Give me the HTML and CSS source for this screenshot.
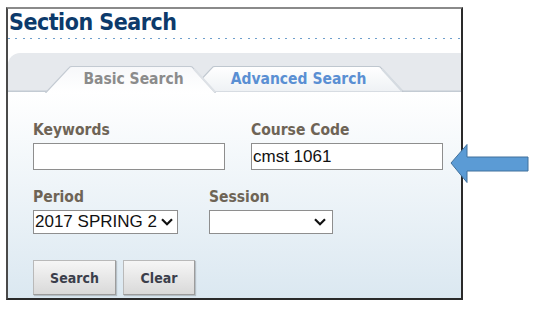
FILE: index.html
```html
<!DOCTYPE html>
<html>
<head>
<meta charset="utf-8">
<link rel="stylesheet" href="styles.css">
</head>
<body>
<div class="frame">
  <h1 class="title">Section Search</h1>
  <div class="dots"></div>
  <div class="tabband">
    <div class="tab tab-basic">
      <svg class="tab-shape" width="171" height="27" viewBox="0 0 171 27">
        <defs>
          <linearGradient id="gb" x1="0" y1="0" x2="0" y2="1">
            <stop offset="0" stop-color="#f7f8fa"/>
            <stop offset="1" stop-color="#ffffff"/>
          </linearGradient>
        </defs>
        <path d="M0,27 L24,1.8 Q25,0.5 27,0.5 L145,0.5 Q147,0.5 148,1.8 L171,27 Z" fill="url(#gb)"/>
        <path d="M0.5,27 L24,1.8 Q25,0.5 27,0.5 L145,0.5 Q147,0.5 148,1.8 L170.5,27" fill="none" stroke="#c3cad2" stroke-width="1.2"/>
        <path d="M149,3 L170,26" fill="none" stroke="#dde1e6" stroke-width="2"/>
      </svg>
      <span class="tab-label">Basic Search</span>
    </div>
    <div class="tab tab-adv">
      <svg class="tab-shape" width="215" height="26" viewBox="0 0 215 26">
        <defs>
          <linearGradient id="ga" x1="0" y1="0" x2="0" y2="1">
            <stop offset="0" stop-color="#ffffff"/>
            <stop offset="1" stop-color="#eef1f4"/>
          </linearGradient>
        </defs>
        <path d="M0.5,26 L23,1.8 Q24,0.5 26,0.5 L189,0.5 Q191,0.5 192,1.8 L214.5,26 Z" fill="url(#ga)" stroke="#bfc7cf" stroke-width="1.2"/>
        <path d="M193,3 L213,25" fill="none" stroke="#d5dbe1" stroke-width="2"/>
      </svg>
      <span class="tab-label">Advanced Search</span>
    </div>
  </div>
  <div class="panel">
    <div class="row row-top">
      <div class="field">
        <div class="label">Keywords</div>
        <div class="input input-wide"></div>
      </div>
      <div class="field">
        <div class="label">Course Code</div>
        <div class="input input-wide">cmst 1061</div>
      </div>
    </div>
    <div class="row row-mid">
      <div class="field">
        <div class="label">Period</div>
        <div class="select select-period">
          <span class="select-text">2017 SPRING 2</span>
          <svg class="chev" width="12" height="8" viewBox="0 0 12 8"><path d="M1,1.2 L6,6.2 L11,1.2" fill="none" stroke="#111" stroke-width="2.2"/></svg>
        </div>
      </div>
      <div class="field">
        <div class="label">Session</div>
        <div class="select select-session">
          <span class="select-text"></span>
          <svg class="chev" width="12" height="8" viewBox="0 0 12 8"><path d="M1,1.2 L6,6.2 L11,1.2" fill="none" stroke="#111" stroke-width="2.2"/></svg>
        </div>
      </div>
    </div>
    <div class="buttons">
      <div class="btn btn-search">Search</div>
      <div class="btn btn-clear">Clear</div>
    </div>
  </div>
</div>
<svg class="arrow" width="81" height="41" viewBox="0 0 81 41">
  <path d="M2,20 L18,1.5 L18,14 L79,14 L79,28 L18,28 L18,39.5 Z" fill="#5b9bd5" stroke="#41719c" stroke-width="1"/>
</svg>
</body>
</html>
```
FILE: styles.css
```css
* { box-sizing: border-box; }
body {
  margin: 0;
  background: #ffffff;
  position: relative;
  width: 533px;
  height: 315px;
  overflow: hidden;
}
.frame {
  margin: 7px 0 0 6px;
  width: 457px;
  height: 293px;
  border: 2px solid #2a2a2a;
  border-top-color: #8a8a8a;
  border-left-color: #4a4a4a;
  display: flex;
  flex-direction: column;
}
.title {
  margin: 0;
  padding-left: 1px;
  font-family: "DejaVu Sans Condensed", "DejaVu Sans", sans-serif;
  font-stretch: condensed;
  font-weight: bold;
  font-size: 23px;
  letter-spacing: -0.5px;
  line-height: 26px;
  color: #0c3a6b;
}
.dots {
  margin-top: 3px;
  height: 1px;
  background: repeating-linear-gradient(to right, #6f9fcc 0 2px, transparent 2px 7.5px);
}
.tabband {
  margin-top: 14px;
  height: 39px;
  background: #e6e9ed;
  border-top-left-radius: 12px;
  box-shadow: inset 0 -1.5px 0 #c3cbd3;
  display: flex;
  align-items: flex-end;
}
.tab {
  position: relative;
  display: flex;
  align-items: center;
  justify-content: center;
  font-family: "DejaVu Sans Condensed", "DejaVu Sans", sans-serif;
  font-stretch: condensed;
  font-weight: bold;
  font-size: 15.5px;
}
.tab-shape {
  position: absolute;
  left: 0;
  top: 0;
}
.tab-label {
  position: relative;
  line-height: 26px;
}
.tab-basic {
  width: 171px;
  height: 27px;
  margin-left: 37px;
  margin-bottom: -1px;
  z-index: 2;
  color: #8b8b8b;
  padding-left: 6px;
  padding-bottom: 1px;
}
.tab-adv {
  width: 215px;
  height: 26px;
  margin-left: -27px;
  z-index: 1;
  color: #5a8fd3;
  padding-left: 4px;
}
.panel {
  flex: 1;
  padding: 29px 0 0 25px;
  background: linear-gradient(#ffffff, #dbe8f1);
}
.row {
  display: flex;
}
.row-top { gap: 26px; }
.row-mid { gap: 31px; margin-top: 18px; }
.field {
  display: flex;
  flex-direction: column;
}
.label {
  font-family: "DejaVu Sans Condensed", "DejaVu Sans", sans-serif;
  font-stretch: condensed;
  font-weight: bold;
  font-size: 15.5px;
  line-height: 18px;
  color: #6e6456;
  margin-bottom: 4px;
}
.input {
  height: 27px;
  border: 1px solid #8e8e8e;
  background: #ffffff;
  font-family: "Liberation Sans", Arial, sans-serif;
  font-size: 17px;
  line-height: 25px;
  padding-left: 1px;
  color: #111;
}
.input-wide { width: 192px; }
.select {
  height: 24px;
  border: 1px solid #8e8e8e;
  background: #ffffff;
  display: flex;
  align-items: center;
  justify-content: space-between;
  padding: 0 4px 0 1px;
  font-family: "Liberation Sans", Arial, sans-serif;
  font-size: 17px;
  line-height: 22px;
  color: #111;
}
.select-period { width: 145px; }
.select-session { width: 124px; padding-right: 6px; }
.chev { display: block; }
.buttons {
  display: flex;
  gap: 7px;
  margin-top: 26px;
}
.btn {
  height: 35px;
  border: 1px solid #b9b9b9;
  border-right-color: #9c9c9c;
  border-bottom-color: #9c9c9c;
  background: linear-gradient(#f6f6f6, #d9d9d9);
  box-shadow: 1px 1px 1px rgba(0,0,0,0.18);
  display: flex;
  align-items: center;
  justify-content: center;
  font-family: "DejaVu Sans Condensed", "DejaVu Sans", sans-serif;
  font-stretch: condensed;
  font-weight: bold;
  font-size: 14px;
  color: #3b3e4b;
}
.btn-search { width: 83px; }
.btn-clear { width: 72px; }
.arrow {
  position: absolute;
  left: 449px;
  top: 143px;
}
```
